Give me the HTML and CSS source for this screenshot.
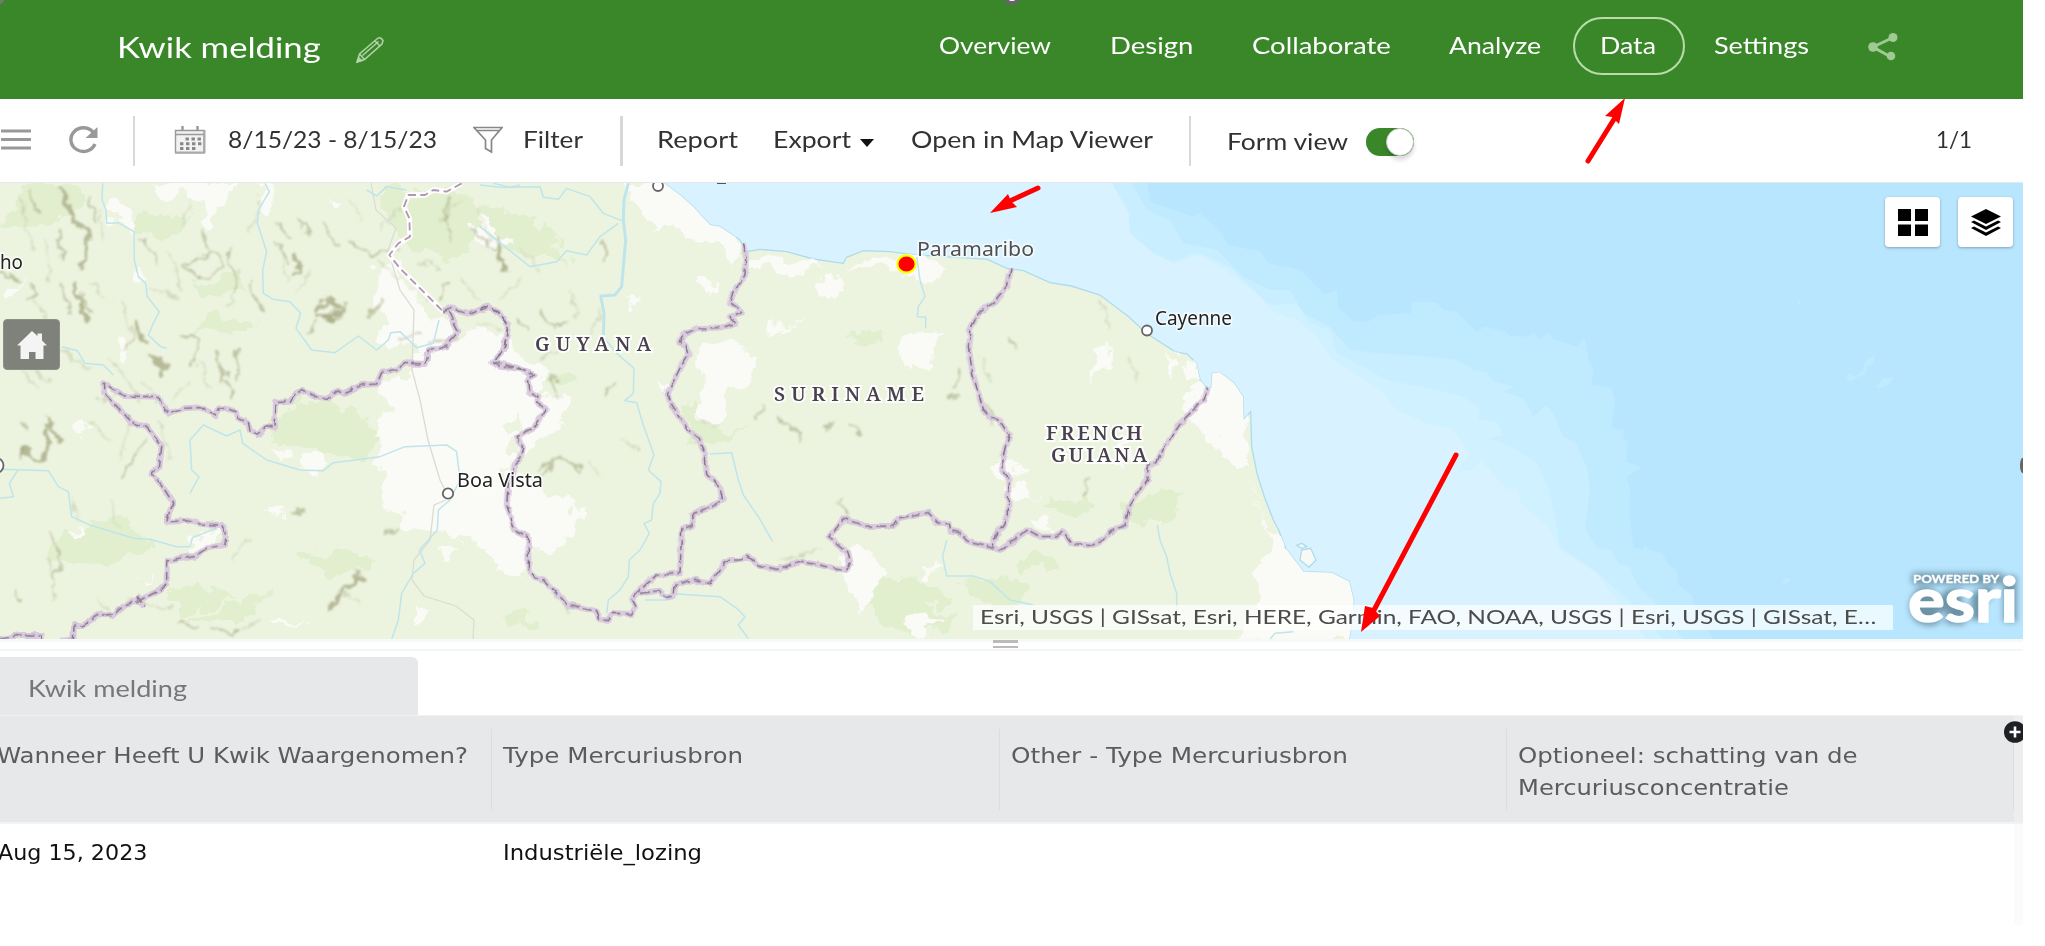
FILE: index.html
```html
<!DOCTYPE html>
<html lang="en">
<head>
<meta charset="utf-8">
<title>Kwik melding</title>
<link rel="stylesheet" href="styles.css">
</head>
<body>
<div class="app">
  <header class="topbar">
    <h1 class="title fit"><span>Kwik melding</span></h1>
    <svg class="pencil" viewBox="0 0 30 28" width="30" height="28"><path d="M2 26 L4.5 18 L22.5 2.5 Q25.5 0.5 28 4.5 L27 8 L9.5 23.5 Z M4.5 18 L9.5 23.5 M20 5 L25.5 10.5 M7.5 19.5 L23.5 5.5"/><path class="tip" d="M1 27L3.500 20.500 8 25Z"/></svg>
    <nav class="nav">
      <a class="fit n-overview"><span>Overview</span></a>
      <a class="fit n-design"><span>Design</span></a>
      <a class="fit n-collab"><span>Collaborate</span></a>
      <a class="fit n-analyze"><span>Analyze</span></a>
      <a class="pill"><span class="fit n-data"><span>Data</span></span></a>
      <a class="fit n-settings"><span>Settings</span></a>
    </nav>
    <svg class="share" viewBox="0 0 30 28" width="30" height="28"><path d="M25 4.5 L5 14 L22 23.5" /><circle cx="25" cy="4.5" r="4.5"/><circle cx="5" cy="14" r="4.8"/><circle cx="23" cy="23" r="4.3"/></svg>
    <i class="grip-top"></i><i class="grip-left"></i>
  </header>

  <div class="toolbar">
    <svg class="burger" viewBox="0 0 30 21" width="30" height="21"><path d="M0 2H30M0 10.5H30M0 19H30"/></svg>
    <svg class="refresh" viewBox="0 0 32 28" width="32" height="28"><path class="arc" d="M26 6 A12.5 11.8 0 1 0 28 18"/><path d="M30.5 1 V12 H18.5 Z"/></svg>
    <i class="sep s1"></i>
    <svg class="cal" viewBox="0 0 32 28" width="32" height="28"><path class="box" d="M1.500 4.500 H30 V26.500 H1.500 Z M1.500 8.500 H30"/><path class="edge" d="M30.500 4V27M1 26.800H31"/><path class="ring" d="M8.500 0 V5 M23.500 0 V5"/><path class="dots" d="M11.500 13 H27.500"/><path class="dots" d="M6 17.800 H27.500"/><path class="dots" d="M6 22.500 H21.500"/></svg>
    <span class="fit date"><span>8/15/23 - 8/15/23</span></span>
    <svg class="funnel" viewBox="0 0 30 28" width="30" height="28"><path d="M1 1.500 H29 L18.500 14 V26 L12.500 22.500 V14 Z M4 4.500 H26"/></svg>
    <span class="fit filter"><span>Filter</span></span>
    <i class="sep s2"></i>
    <span class="fit report"><span>Report</span></span>
    <span class="fit export"><span>Export</span></span>
    <i class="caret"></i>
    <span class="fit open"><span>Open in Map Viewer</span></span>
    <i class="sep s3"></i>
    <span class="fit formview"><span>Form view</span></span>
    <i class="toggle"><i class="knob"></i></i>
    <span class="fit count"><span>1/1</span></span>
  </div>

  <section class="map">
    <svg class="basemap" viewBox="0 183 2023 456" width="2023" height="456">
      <defs>
        <filter id="rough" x="-5%" y="-5%" width="110%" height="110%"><feTurbulence type="fractalNoise" baseFrequency="0.045" numOctaves="4" seed="4"/><feDisplacementMap in="SourceGraphic" scale="30" xChannelSelector="R" yChannelSelector="G"/></filter>
        <filter id="jag" x="-5%" y="-5%" width="110%" height="110%"><feTurbulence type="fractalNoise" baseFrequency="0.09" numOctaves="2" seed="8"/><feDisplacementMap in="SourceGraphic" scale="5" xChannelSelector="R" yChannelSelector="G"/></filter>
        <filter id="ridge" x="-5%" y="-5%" width="110%" height="110%"><feTurbulence type="fractalNoise" baseFrequency="0.08" numOctaves="3" seed="3"/><feDisplacementMap in="SourceGraphic" scale="15" xChannelSelector="R" yChannelSelector="G"/><feGaussianBlur stdDeviation="0.8"/></filter>
        <filter id="glow" x="-20%" y="-20%" width="140%" height="140%"><feGaussianBlur stdDeviation="3"/></filter>
      </defs>
      <rect y="180" width="2023" height="460" fill="#b9e6ff"/>
      <g transform="translate(1430 180) scale(.33333)">
        <path fill="#c0ebff" d="M-4290 0H-851L-840 65-711 110-690 100-626 160-604 195-508 215-486 250-390 270-315 345-278 330V380L-229 425H-186L-154 405-58 400-52 365H0L20 370 45 392 80 395 140 455 165 440 225 455 240 468 300 470 310 458 330 480 355 458 370 478 440 500 465 475 475 540 490 565 485 615 545 625 555 660 545 745 582 750 580 780 592 785 588 845 635 862 590 890 600 930 598 1010 610 1100 640 1110 645 1095 655 1110 695 1120 720 1160 740 1170 745 1215 785 1245 795 1280 850 1380H-4290Z"/>
        <path fill="#c8eeff" d="M-4290 0H-900L-850 90-780 120-740 190-640 210-560 290-480 330-420 330-380 400-300 440-240 510-150 520 0 530 80 540 130 570 170 575 190 605 250 620 220 635 280 655 310 710 350 675 370 700 400 770 435 785 470 860 480 930 465 1045 500 1105 545 1110 565 1150 600 1160 620 1215 690 1280 760 1380H-4290Z"/>
        <path fill="#d0f1ff" d="M-4290 0H-960L-900 100-910 160-840 215-770 245-700 215-600 260-560 300-480 375-400 370-360 430-300 450-280 520-200 560-130 600 0 625 100 650 150 685 145 715 200 725 220 765 175 775 250 800 320 850 355 920 375 1010 390 1100 500 1175 640 1300 700 1380H-4290Z"/>
        <path fill="#d9f2ff" d="M-4290 0H-960L-905 100-900 160-830 220-770 250-690 225-620 265-510 350-470 395-400 420-340 470-290 540-215 590-150 630-100 690 0 735 65 745 120 820 80 875 130 870 155 840 225 925 260 930 275 975 355 1040 390 1110 500 1180 560 1260 650 1380H-4290Z"/>
        <path fill="#c0ebff" d="M1250 600L1255 580 1275 590 1300 570 1305 545 1335 525 1332 548 1312 560 1305 582 1280 592 1265 602ZM1338 620L1360 595 1392 590 1380 610 1350 626ZM1056 1208L1065 1195 1082 1198 1070 1211ZM1102 366L1108 362 1113 370 1106 376Z"/>
      </g>
      <g transform="translate(480 180) scale(.33333)">
        <path id="landfill" fill="#ecf4df" stroke="#aedcee" stroke-width="4" d="M540 0L600 45 640 80 690 135 720 140 780 180 800 215 840 208 920 215 1000 237 1090 250 1100 232 1150 212 1230 215 1310 225 1430 232 1522 238 1581 265 1630 272 1710 308 1774 318 1860 345 1946 410 1999 460 2085 515 2122 522 2149 550 2160 600 2176 620 2194 625 2197 580 2219 577 2262 610 2289 650 2291 720 2312 695 2315 800 2331 880 2353 950 2380 1020 2396 1050 2417 1105 2471 1175 2556 1178 2608 1205 2621 1260 2619 1310 2605 1390H-1450V-10Z"/>
        <path fill="#f8f9f4" stroke="#aedcee" stroke-width="4" d="M2465 1110L2492 1105 2508 1140 2487 1162 2460 1140ZM2450 1096L2465 1090 2480 1100 2465 1105Z"/>
      </g>
      <clipPath id="lc"><path transform="translate(480 180) scale(.33333)" d="M540 0L600 45 640 80 690 135 720 140 780 180 800 215 840 208 920 215 1000 237 1090 250 1100 232 1150 212 1230 215 1310 225 1430 232 1522 238 1581 265 1630 272 1710 308 1774 318 1860 345 1946 410 1999 460 2085 515 2122 522 2149 550 2160 600 2176 620 2194 625 2197 580 2219 577 2262 610 2289 650 2291 720 2312 695 2315 800 2331 880 2353 950 2380 1020 2396 1050 2417 1105 2471 1175 2556 1178 2608 1205 2621 1260 2619 1310 2605 1390H-1450V-10Z"/></clipPath>
      <g clip-path="url(#lc)">
        <!-- forest tint -->
        <g filter="url(#rough)" fill="#e1efcf">
          <path d="M20 190l50-6 20 20-30 18-60 10zM140 210l50 8-20 20-40-6zM380 190l90 4 20 40-40 30-60-30zM500 200l40 30 30 30-60-5-50-30zM190 285l40-10 20 16-50 12zM280 405l50-6 20 30-40 20-40-14zM290 420l60-8 30 16-10 26-50 6-50-20zM60 530l60-8 40 20-60 24-50-8zM170 590l50-8 20 14-60 20zM180 620l60-20 30-10-20 30zM300 555l60-2 20 12-50 14zM540 385l20-16 20 12-24 12zM690 400l16 30 40-2-20 16-40 0zM845 335l20-4 16 6-14 6zM860 580l60-4 30 20-50 20-30-4zM960 580l50-4 20 20-40 14zM1040 500l40-8 20 14-30 14zM1120 505l30-8 10 20-30 8zM880 600l80 10-20 22-60-6zM1010 560l40-4 10 12-40 6zM500 610l30 4 4 20-30-6zM1150 505l18-18 14 18-20 22zM500 225l20-15 40 30-30 10zM230 310l30 14-30 10-40-4z"/>
        </g>
        <!-- savanna and bare ground -->
        <g filter="url(#rough)" fill="#fafaf6">
          <path d="M145 184h90l-12 20-14 20-10-6 4-16-30-8-20 2zM104 200l10-3 22 28-6 12-20-14zM262 184l14 20-6 16-8-6zM325 203l12-3 4 8-12 3zM130 270l14-6 4 14-10 6zM470 222l20-2 22 22-20 12-14-12zM120 340l8-8 6 16-8 12zM8 294l14-12-4 14-12 4z"/>
          <path d="M375 268l22-8 14 22 18 36 24 12 8 30-30 6-20-20-30-30zM385 320l30-4 10 20-30 16-20-10zM410 358l50-24 40-6 40 40 0 30-30 26 0 60 22 60-10 40-20-20-40-30-60-10-26-60 30-40z"/>
          <path d="M520 400l50-4-16 36-40 30zM512 470l40 24 28 6-10 40-20 14-36-6zM505 535l20 10-8 14-14-8zM380 380l40-6 20 70-6 30-40-20-26-20 24-30z"/>
          <path d="M622 184l50 0 50 40 22 20-12 22-30-32-30-6-24-16zM645 210l16-4 4 18-14 6zM700 275l18 6-8 14-14-8zM745 255l50 2 30 12-40 4-40-6zM845 262l50-8 20 6-40 10zM815 280l22-6 6 16-20 8zM902 260l30-4 12 14-16 12-22-8zM905 335l24-4 14 8-16 26-20 4-10-12z"/>
          <path d="M705 346l30-8 20 20-10 26-20 14-10 28-16-6 6-40-14-16zM768 326l36-6-14 8-24 10zM620 300l10-3 8 7-14 5zM1100 348l10-4 2 20-10 14-12 2 8-10z"/>
          <path d="M838 560l20-22 28 30-8 34-20 18-10-30zM1002 488l20-4 14 12-20 8zM660 380l20 12-14 6z"/>
          <path d="M1200 385l-14-14 26-12 34 20 5 90-16-6-20-20-20-22-10-14zM1250 480l20 50 30 20 60 30 10 62h-140l26-30-2-46 20-18zM1120 445l14 4-8 20-8-8zM1170 345l14 20-20 16 0-6 10-10zM994 462l30 4-16 12-14-4zM1028 522l20-4 6 8-24 6zM900 620l40-6-10 18-14 2zM920 565l24 4-20 8z"/>
          <path d="M270 450l20 2-6 8-12-4zM300 460l26 0-10 14-20-6zM265 510l24 4-14 8zM440 552l24-4-18 14zM192 535l26-2-6 12-22 6zM80 430l10-6-4 18zM412 600l14 10-4 14-10 4zM138 578l16-4-10 8zM70 530l14-6 0 10zM270 625l40-4-30 10z"/>
        </g>
        <!-- relief -->
        <g filter="url(#ridge)" fill="none" stroke="#a9aa86" stroke-linecap="round">
          <path stroke-width="4" opacity=".8" d="M60 188L76 222 88 236 80 270M74 285L86 320M295 252L302 270 294 276M498 240L504 270M318 310Q330 290 340 310Q335 322 318 316M24 448Q36 470 46 455L48 420L60 438M330 610L345 590 362 578M134 320L144 342M150 356L166 366 160 376"/>
          <path stroke-width="2.400" opacity=".65" d="M28 192L40 215M60 230L64 260M186 270Q196 250 216 256Q228 268 212 276Q196 280 188 272M250 285L262 310M276 220L290 240M324 222L338 246M336 302L328 320 340 314M350 240L372 256 400 250M450 195L444 220 452 240M470 225L496 250M440 300L446 280M125 350L134 330M180 335L198 340 192 368M216 352L224 376 232 400M238 380L236 350M120 480Q140 450 146 440M50 530L60 560 54 580M16 588L22 598M180 624L198 626M210 630L236 632M22 424L30 430M24 448L20 460M384 535L396 530M290 515L302 512M62 285L70 310M30 280L36 295 28 300M370 320L380 300M400 340L420 330M430 345L460 338M518 320L528 332 520 324M540 310L556 330 566 320M552 375L556 395M600 240L606 260M540 470L560 455 580 470M612 385L606 396M544 478L556 456M560 600L570 610M756 420L764 408M780 420L800 430 800 445M824 428L832 420M850 425L860 436M955 390L960 370M948 398L960 394M990 405L994 425M1086 480V496M840 500L848 515M1010 340L1016 350M1060 250L1070 265M0 272L20 278M90 200L96 220M140 240L158 260M200 230L210 250M230 250L236 290M300 220L310 235M310 330L318 322M276 245L288 262M330 298L336 312M345 300L340 318M500 260L508 272M350 585L362 572M90 240L84 256M78 292L90 312"/>
          <path stroke-width="1.600" opacity=".4" d="M20 200L34 250M44 240L50 280M100 210L104 240M110 360L140 400M150 290L180 300M180 230L190 200M240 270L230 310M280 250L286 280M310 270L300 290M400 210L380 230M420 260L440 270M480 210L490 240M500 300L520 280M16 360L40 390M30 370L50 380M100 400L120 390M70 500L80 520M160 420L170 460M200 360L210 390M50 560L56 600M96 600L110 610M540 360L560 350M570 290L580 320M600 310L590 340M260 200L250 230M170 250L180 290M110 500L120 530M230 560L250 540M340 590L360 600M590 460L600 480M620 440L640 450M700 420L720 430M780 560L820 550M1100 300L1110 330M1080 260L1090 280M1130 360L1140 380M980 360L990 380M1150 300L1160 320M30 300L60 330M40 330L70 360M90 280L110 300M120 300L130 330M60 350L90 370M140 380L160 400M170 400L190 380M350 200L360 220M380 260L400 280M410 290L430 300M460 280L480 300M440 220L460 200M520 250L540 270M480 320L500 330M130 600L170 610M240 630L260 620M90 420L110 440M130 420L120 460"/>
        </g>
        <!-- roads -->
        <g fill="none" stroke="#dcdcd4" stroke-width="1.300"><path d="M371 183L376 210 396 228 388 250 400 290 414 310 412 370 420 400 428 440 440 480 446 492M446 500L434 505 430 540 414 560 412 580 424 596 456 606 474 620 473 640"/></g>
        <!-- rivers -->
        <g fill="none" stroke="#bfe5ec" stroke-width="1.500" stroke-linejoin="round">
          <g transform="translate(0 180) scale(.33333)" stroke-width="4.500">
            <path d="M308 10L306 60 318 90 320 130 355 128 402 155 403 240 415 290 437 310 442 350 478 395 460 430 445 465 482 500 500 504M795 10L808 35 775 90 772 130 800 215 788 270 790 340 820 358 870 365 902 400 888 445 935 510 1005 518 1075 468 1130 510 1165 480 1172 458 1200 455 1250 503 1300 490 1317 420M185 500L232 512 255 550 310 555 340 585M570 940L597 890 575 870 570 780 610 735 680 768 720 750 728 790 800 840 900 870 970 872 1000 848 1140 830 1215 800 1340 795 1370 815 1380 900 1350 960 1315 990 1312 1050 1258 1110 1275 1150 1240 1180 1205 1240 1195 1320 1175 1378M0 868L145 872 175 920 205 935 215 1010 270 1035 400 1075 450 1078 530 1100 570 1100 578 1072 650 1045M55 868L28 910 40 950 0 955M1100 30L1130 48 1160 20 1220 30M1480 10L1530 22 1560 15"/>
          </g>
          <g transform="translate(480 180) scale(.33333)" stroke-width="4.500">
            <path stroke-width="9" d="M445 10L432 60 430 120 437 180 425 320 405 345 362 348 372 400 370 470"/>
            <path d="M0 15L60 22 180 20 190 52 235 58 260 25 330 50 370 100 425 122M415 130L360 170 320 225 260 212 230 245 150 260 0 140M370 470L410 520 462 565 460 640 435 662 470 668 490 735 522 825 505 870 543 905 540 940 520 970 515 1020 492 1030 508 1060 480 1110 448 1140 445 1190 420 1230 385 1260 380 1300M690 822L755 818 775 900 790 945 835 1010 878 1085M495 1260L560 1260 590 1242 720 1250 770 1285 795 1310 775 1335 805 1376M1310 230L1320 300 1335 350 1315 380 1312 410 1337 412V445M1400 1080L1388 1130 1400 1188 1480 1188 1530 1205 1590 1260 1660 1275M2032 1035L2040 1080 2060 1130 2070 1180 2090 1240V1290M2370 1378L2385 1360 2440 1355"/>
          </g>
        </g>
      </g>
      <!-- disputed boundary -->
      <g transform="translate(0 180) scale(.33333)" fill="none" stroke-linejoin="round">
        <path stroke="#fffdfd" stroke-width="16" d="M1385 10L1340 35 1300 30 1275 45 1225 45 1212 80 1228 115 1230 170 1195 190 1168 225 1200 265 1330 395"/>
        <path stroke="#ae98b3" stroke-width="5.500" stroke-dasharray="24 13" d="M1385 10L1340 35 1300 30 1275 45 1225 45 1212 80 1228 115 1230 170 1195 190 1168 225 1200 265 1330 395"/>
      </g>
      <defs>
        <g id="borders">
          <g transform="translate(0 180) scale(.33333)">
            <path vector-effect="non-scaling-stroke" d="M1330 395L1355 385 1410 400 1440 390 1467 380 1500 400 1525 435 1512 510 1478 545 1560 565M1345 395L1375 455 1340 495 1285 515 1278 552 1215 550 1190 570 1145 578 1130 612 1085 615 1030 640 1010 632 985 655 940 648 905 632 885 640 870 665 825 668 822 745 800 740 775 765 750 750 745 728 715 715 710 695 660 682 645 708 610 682 550 685 510 702 495 690 480 650 375 648 345 630 310 610 312 640 375 705 390 725 440 742 485 798 478 860 455 880 485 915 518 968 500 1025 560 1022 600 1032 665 1035 675 1055 672 1095 620 1105 590 1125 500 1142 500 1210 480 1230 420 1260 400 1262 370 1280 340 1308 305 1300 250 1335 222 1335 220 1380 180 1378M410 1245L435 1280M0 1378L60 1365 125 1365V1378"/>
          </g>
          <g transform="translate(480 180) scale(.33333)">
            <path vector-effect="non-scaling-stroke" d="M0 390L27 380 60 400 85 435 72 510 38 545 60 560 110 565 160 585 145 600 150 635 175 650 170 670 200 688 178 720 160 745 108 773 128 800 120 835 105 850 100 880 85 905 80 975 105 1050 145 1070V1165L165 1192 195 1200 260 1272 350 1295 360 1318 385 1322 400 1300 455 1302 465 1280 455 1260 480 1230 530 1185 600 1180 605 1050 640 1035 635 1005 690 980 728 960 720 925 680 880 675 825 655 775 625 750 570 665 562 640 605 555 625 525 615 495 598 488 610 465 650 445 735 442 765 432 750 410 785 400 775 385 750 368 770 320 795 285 798 215 790 190"/>
            <path vector-effect="non-scaling-stroke" d="M480 1240L535 1232 560 1250 582 1245 585 1215 640 1198 690 1208 735 1150 750 1140 775 1140 805 1130 835 1155 890 1168 965 1145 1095 1170 1110 1155 1100 1115 1045 1068 1075 1045 1090 1015 1155 1038 1240 1038 1255 1015 1300 1005 1345 998 1375 1032 1408 1030 1412 1052 1440 1058 1460 1082 1500 1095 1530 1098 1560 1110 1605 1080 1640 1048 1680 1070 1725 1070 1750 1055 1775 1090 1840 1098 1870 1080 1885 1060 1935 1035 1948 980 2000 900 2005 860 2030 845 2060 790 2100 730 2170 660 2182 620"/>
            <path vector-effect="non-scaling-stroke" d="M1593 265L1582 320 1545 365 1495 400 1470 450 1465 500 1478 580 1495 640 1510 690 1535 715 1560 722 1588 765 1568 830 1570 870 1585 890V1010L1545 1070 1540 1098"/>
          </g>
        </g>
      </defs>
      <g filter="url(#jag)" fill="none" stroke-linejoin="round">
        <use href="#borders" stroke="#dacade" stroke-width="6"/>
        <use href="#borders" stroke="#857889" stroke-width="1.500" stroke-dasharray="9 4"/>
      </g>
      <!-- places -->
      <g class="place">
        <circle cx="448" cy="493.500" r="5.200"/><circle cx="1147" cy="330.500" r="5"/><circle cx="658" cy="186" r="5"/><circle cx="-4" cy="465.500" r="7.500"/>
      </g>
      <path d="M717 183h9" stroke="#555" stroke-width="2"/>
      <g class="label" font-size="19">
        <text x="457" y="487" textLength="86" lengthAdjust="spacingAndGlyphs">Boa Vista</text>
        <text x="1155" y="325" textLength="77" lengthAdjust="spacingAndGlyphs">Cayenne</text>
        <text class="soft" x="917" y="255.500" font-size="19.500" textLength="117" lengthAdjust="spacingAndGlyphs">Paramaribo</text>
        <text x="0" y="268.500" textLength="23" lengthAdjust="spacingAndGlyphs">ho</text>
      </g>
      <g class="country">
        <text x="535" y="350.500" textLength="116">GUYANA</text>
        <text x="774" y="401" textLength="150">SURINAME</text>
        <text x="1046" y="440" textLength="96">FRENCH</text>
        <text x="1051" y="462" textLength="96">GUIANA</text>
      </g>
      <ellipse cx="906.500" cy="264" rx="9.200" ry="8.600" fill="#f00" stroke="#ff0" stroke-width="2.200"/>
      <path d="M2023 458h-1q-2 2-2 7.500t2 7.500h1z" fill="#666"/>
      <g class="esri">
        <g filter="url(#glow)" stroke="#5f8496" fill="#5f8496" stroke-width="3" opacity=".85"><rect x="1912" y="573" width="90" height="11" stroke="none"/><path fill="none" stroke-width="13" d="M1916 606H1936Q1932 592 1922 594Q1912 606 1920 616Q1930 622 1938 615M1962 596Q1944 592 1948 604Q1966 608 1960 618L1946 617M1978 620V598Q1984 592 1992 594M2010 576V622"/></g>
        <text class="pow" x="1913" y="582.500" textLength="86" lengthAdjust="spacingAndGlyphs">POWERED BY</text>
        <text class="big" x="1908" y="622" textLength="110" lengthAdjust="spacingAndGlyphs">esri</text>
      </g>
    </svg>
    <div class="home"><svg viewBox="0 0 30 28" width="30" height="28"><path d="M15 0L20.500 5V2.500H25V9.500L30 14.500H26.500V28H18.500V21H12V28H3.500V14.500H0Z"/></svg></div>
    <div class="mapbtns">
      <button class="mbtn"><svg viewBox="0 0 30 27" width="30" height="27"><path d="M0 0h13v12H0zM17 0h13v12H17zM0 15.500h13V27H0zM17 15.500h13V27H17z"/></svg></button>
      <button class="mbtn"><svg viewBox="0 0 30 27" width="30" height="27"><path d="M15 0L30 7.500 15 15 0 7.500ZM0 13L3 11.500 15 17.500 27 11.500 30 13 15 21ZM0 19L3 17.500 15 23.500 27 17.500 30 19 15 27Z"/></svg></button>
    </div>
    <div class="attribution"><span class="fit attr"><span>Esri, USGS | GISsat, Esri, HERE, Garmin, FAO, NOAA, USGS | Esri, USGS | GISsat, E…</span></span></div>
  </section>

  <div class="splitter"><i></i></div>

  <section class="tablepane">
    <div class="tab"><span class="fit tabname"><span>Kwik melding</span></span></div>
    <div class="thead">
      <div class="th c1"><span class="fit h1"><span>Wanneer Heeft U Kwik Waargenomen?</span></span></div>
      <div class="th"><span class="fit h2"><span>Type Mercuriusbron</span></span></div>
      <div class="th"><span class="fit h3"><span>Other - Type Mercuriusbron</span></span></div>
      <div class="th"><span class="fit h4"><span>Optioneel: schatting van de</span></span><span class="fit h5"><span>Mercuriusconcentratie</span></span></div>
      <div class="gutter"></div>
      <svg class="plus" viewBox="0 0 20 24" width="20" height="24"><ellipse cx="12" cy="12" rx="11" ry="10.800"/><path d="M12 6.500V17.500M6.500 12H17.500"/></svg>
    </div>
    <div class="row">
      <div class="td c1"><span class="fit d1"><span>Aug 15, 2023</span></span></div>
      <div class="td"><span class="fit d2"><span>Industriële_lozing</span></span></div>
      <div class="td"></div><div class="td"></div><div class="gutter"></div>
    </div>
  </section>

  <svg class="arrows" viewBox="0 0 2023 946" width="2023" height="946">
    <g stroke="#f00" stroke-width="5" stroke-linecap="round"><path d="M1588 161L1616 116M1038 188L1012 200M1456 455L1373 612"/></g>
    <g fill="#f00"><path d="M1625 98L1605 116 1612 117 1619 124ZM990 213L1008 194 1011 201 1017 207ZM1361 632L1365 606 1373 608 1380 616Z"/></g>
  </svg>
</div>
</body>
</html>
```

FILE: styles.css
```css
* { box-sizing: border-box; }
body { margin: 0; background: #fff; font-family: Lato, "Open Sans", sans-serif; }
.app { position: relative; width: 2023px; height: 946px; overflow: hidden; background: #fff; }

/* Labels are set slightly extended: the box has the final width, the inner span is scaled into it */
.fit { display: block; flex: none; white-space: nowrap; font-weight: 400; }
.fit > span { display: inline-block; margin-left: -2px; transform-origin: 0 50%; transform: scaleX(var(--k, 1)); }

.topbar { position: relative; display: flex; height: 99px; background: #3a872a; color: #fff; }
.title { --k: 1.175; margin: 0 0 0 119px; width: 202px; font-size: 29.5px; line-height: 93px; }
.pencil { margin: 36px 0 0 34px; fill: none; stroke: #b3d3a9; stroke-width: 1.5; }
.pencil .tip { fill: #b3d3a9; stroke: none; }
.nav { display: flex; margin-left: 556px; font-size: 23.5px; line-height: 91px; }
.n-overview { --k: 1.12; width: 111px; }
.n-design { --k: 1.17; width: 82px; margin-left: 60px; }
.n-collab { --k: 1.17; width: 138px; margin-left: 60px; }
.n-analyze { --k: 1.134; width: 91px; margin-left: 59px; }
.pill { display: flex; justify-content: center; width: 112px; height: 58px; margin: 17px 0 0 31px; border: 2px solid #b9dcaa; border-radius: 29px; line-height: 53px; }
.n-data { --k: 1.138; width: 54px; }
.n-settings { --k: 1.153; width: 93px; margin-left: 31px; }
.share { margin: 33px 0 0 59px; fill: #9fca92; stroke: none; }
.share path { fill: none; stroke: #9fca92; stroke-width: 3; }
.grip-top { position: absolute; left: 1004px; top: -10px; width: 16px; height: 15px; border: 4px solid #666; border-radius: 8px; background: #fff; }
.grip-left { position: absolute; left: -6px; top: -6px; width: 10px; height: 10px; border-radius: 5px; background: #777; }

.toolbar { display: flex; height: 84px; border-bottom: 1px solid #e4e8ea; background: #fff; color: #323232; font-size: 23.5px; line-height: 81px; }
.burger { margin: 30px 0 0 1px; fill: none; stroke: #999; stroke-width: 3; }
.refresh { margin: 27px 0 0 36px; fill: #999; }
.refresh .arc { fill: none; stroke: #999; stroke-width: 3.4; }
.sep { flex: none; width: 2px; height: 50px; margin-top: 17px; background: #d8d8d8; }
.s1 { margin-left: 34px; }
.cal { margin: 27px 0 0 39px; fill: none; }
.cal .box { fill: #f2f2f2; stroke: #999; stroke-width: 1.4; }
.cal .edge { stroke: #aaa; stroke-width: 2; }
.cal .ring { stroke: #999; stroke-width: 2.4; }
.cal .dots { stroke: #888; stroke-width: 3; stroke-dasharray: 3.4 2.6; }
.date { --k: 1.047; width: 207px; margin-left: 24px; }
.funnel { margin: 27px 0 0 36px; fill: none; stroke: #888; stroke-width: 1.7; }
.filter { --k: 1.115; width: 57px; margin-left: 22px; }
.s2 { margin-left: 38px; width: 3px; }
.report { --k: 1.16; width: 79px; margin-left: 36px; }
.export { --k: 1.134; width: 76px; margin-left: 37px; }
.caret { flex: none; width: 0; height: 0; margin: 40px 0 0 9px; border: 7px solid transparent; border-top: 8px solid #111; border-bottom: 0; }
.open { --k: 1.138; width: 240px; margin-left: 39px; }
.s3 { margin-left: 36px; }
.formview { --k: 1.127; width: 119px; margin-left: 38px; line-height: 84px; }
.toggle { position: relative; flex: none; display: flex; justify-content: flex-end; width: 48px; height: 28px; margin: 29px 0 0 18px; border-radius: 14px; background: #3a872a; }
.knob { width: 28px; height: 28px; border: 1.5px solid #c4c8c4; border-radius: 50%; background: #fff; box-shadow: 0 4px 4px rgba(0,0,0,.15); }
.count { --k: .95; width: 34px; margin-left: 524px; }

.map { position: relative; height: 456px; overflow: hidden; background: #b9e6ff; }
.basemap { display: block; }
.place circle { fill: #fff; stroke: #666; stroke-width: 1.8; }
.label { font-family: "Noto Sans", sans-serif; fill: #222; }
.label text { paint-order: stroke; stroke: rgba(255,255,255,.7); stroke-width: 3px; }
.label .soft { fill: #505050; }
.country text { font-family: "Noto Serif", "Liberation Serif", serif; font-weight: 600; font-size: 19.5px; fill: #4a4050; paint-order: stroke; stroke: rgba(255,255,255,.85); stroke-width: 4px; }
.esri text { fill: #fff; stroke: #fff; font-family: Lato, sans-serif; }
.esri .pow { font-size: 11.5px; font-weight: 700; stroke-width: .3px; }
.esri .big { font-size: 61px; font-weight: 700; stroke-width: 1.6px; }
.home { position: absolute; left: 3px; top: 136px; display: flex; align-items: center; justify-content: center; width: 57px; height: 51px; border: 1px solid #8d9086; border-radius: 4px; background: #7f817b; }
.home svg { fill: #f4f4f4; }
.mapbtns { position: absolute; top: 14px; right: 10px; display: flex; gap: 18px; }
.mbtn { display: flex; align-items: center; justify-content: center; width: 55px; height: 50px; padding: 0; border: 0; border-radius: 4px; background: #fff; box-shadow: 0 1px 3px rgba(0,0,0,.3); }
.attribution { position: absolute; left: 973px; top: 422px; width: 920px; height: 25px; padding-left: 9px; background: rgba(255,255,255,.7); color: #4c4c4c; font-size: 20px; line-height: 23px; }
.attr { --k: 1.222; width: 895px; }

.splitter { display: flex; justify-content: center; height: 12px; border-top: 3px solid #f6f9f9; border-bottom: 2px solid #f3f6f6; }
.splitter i { width: 25px; height: 8px; margin: -2px 12px 0 0; border-top: 3px solid #bbb; border-bottom: 2px solid #bbb; z-index: 1; }

.tablepane { padding-top: 6px; }
.tab { width: 418px; height: 58px; padding-left: 30px; border-radius: 0 6px 0 0; background: #e7e8ea; color: #777; font-size: 23px; line-height: 63px; }
.tabname { --k: 1.176; width: 157px; }
.thead { position: relative; display: grid; grid-template-columns: 492px 508px 507px 507px 9px; height: 109px; padding: 13px 0 12px; border-top: 1px solid #f0f2f3; border-bottom: 2px solid #f2f3f4; background: #e7e8ea; color: #5c5c5c; font-family: "DejaVu Sans", sans-serif; font-size: 22px; line-height: 32px; }
.th { padding: 11px 0 0 13px; border-right: 1.5px solid #dcdde0; }
.thead .c1, .row .c1 { padding-left: 0; }
.h1 { --k: 1.11; margin-left: -1px; }
.h2 { --k: 1.116; }
.h3 { --k: 1.125; }
.h4 { --k: 1.113; }
.h5 { --k: 1.1; }
.gutter { background: #eeeeef; margin: -13px 0 -12px; }
.plus { position: absolute; left: 2003px; top: 4px; fill: #1e2024; }
.plus path { stroke: #fff; stroke-width: 2.6; }
.row { display: grid; grid-template-columns: 492px 508px 507px 507px 9px; height: 101px; color: #111; font-family: "DejaVu Sans", sans-serif; font-size: 20.5px; line-height: 58px; }
.td { padding-left: 13px; }
.d1 { --k: 1.084; }
.d2 { --k: 1.107; }
.row .gutter { margin: 0; background: #fafbfb; }

.arrows { position: absolute; left: 0; top: 0; pointer-events: none; }
```
